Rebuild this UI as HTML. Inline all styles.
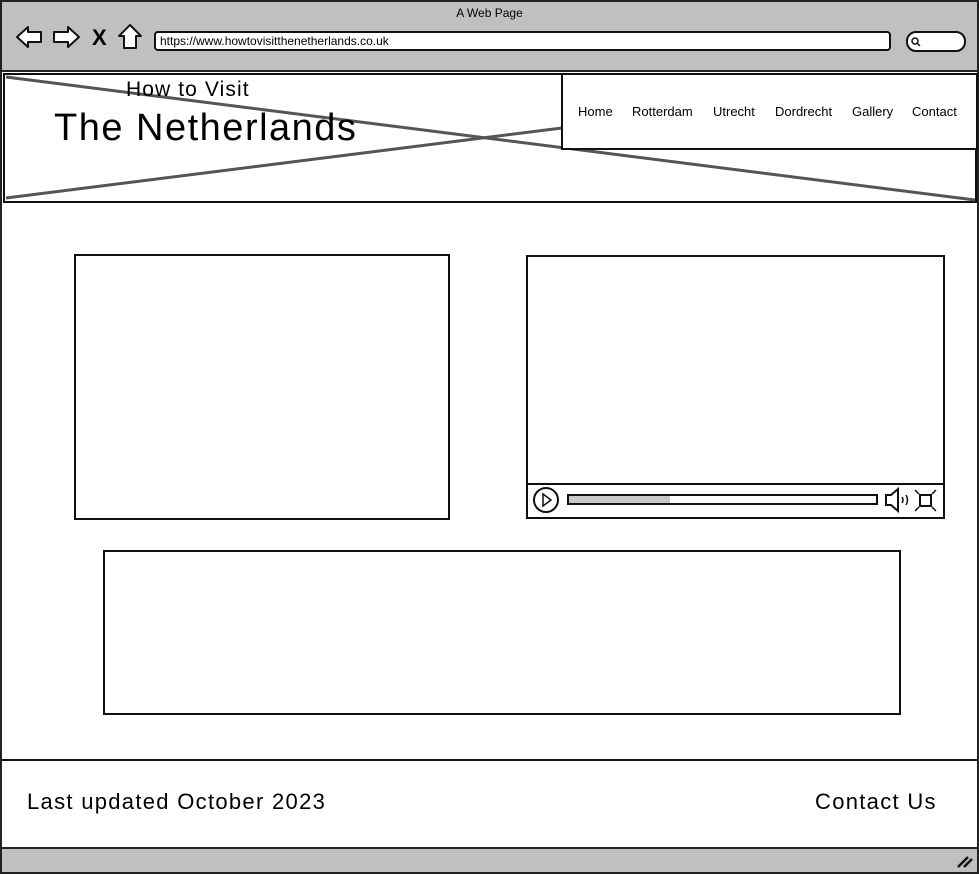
<!DOCTYPE html>
<html><head><meta charset="utf-8"><style>
body{margin:0;width:979px;height:874px;position:relative;background:#fff;font-family:"Liberation Sans",sans-serif;overflow:hidden}
.a{position:absolute;box-sizing:border-box}
.b{border:2px solid #111}
.t{position:absolute;white-space:nowrap;color:#000}
</style></head><body>
<div class="a" style="left:0;top:0;width:979px;height:874px;border:2px solid #222;background:#fff"></div>
<div class="a" style="left:2px;top:2px;width:975px;height:70px;background:#c0c0c0;border-bottom:2px solid #222"></div>
<div class="t" style="left:0;width:979px;text-align:center;top:6px;font-size:12px">A Web Page</div>
<svg class="a" style="left:0;top:0" width="979" height="874">
<g fill="#fff" stroke="#111" stroke-width="2" stroke-linejoin="round">
<path d="M17 37 L28 27 L28 32 L41 32 L41 42 L28 42 L28 47 Z"/>
<path d="M79 37 L68 27 L68 32 L54 32 L54 42 L68 42 L68 47 Z"/>
<path d="M130 25 L141 36 L136 36 L136 48 L124 48 L124 36 L119 36 Z"/>
</g>
<text x="92" y="45" font-size="22" font-weight="bold" font-family="Liberation Sans">X</text>
<rect x="155" y="32" width="735" height="18" rx="3" fill="#fff" stroke="#111" stroke-width="2"/>
<rect x="907" y="32" width="58" height="19" rx="9" fill="#fff" stroke="#111" stroke-width="2"/>
<circle cx="915" cy="41" r="3" fill="none" stroke="#111" stroke-width="1.5"/>
<line x1="917" y1="43" x2="920" y2="46" stroke="#111" stroke-width="1.5"/>
<rect x="4" y="74" width="972" height="128" fill="#fff" stroke="#111" stroke-width="2"/>
<line x1="6" y1="77" x2="975" y2="200" stroke="#555" stroke-width="3"/>
<line x1="6" y1="198" x2="975" y2="76" stroke="#555" stroke-width="3"/>
</svg>
<div class="t" style="left:126px;top:78px;font-size:21px;letter-spacing:1.1px">How to Visit</div>
<div class="t" style="left:160px;top:34px;font-size:12px">https://www.howtovisitthenetherlands.co.uk</div>
<div class="t" style="left:54px;top:107px;font-size:38px;letter-spacing:1.5px">The Netherlands</div>
<div class="a b" style="left:561px;top:73px;width:417px;height:77px;background:#fff"></div>
<div class="t" style="left:578px;top:104px;font-size:13px">Home</div>
<div class="t" style="left:632px;top:104px;font-size:13px">Rotterdam</div>
<div class="t" style="left:713px;top:104px;font-size:13px">Utrecht</div>
<div class="t" style="left:775px;top:104px;font-size:13px">Dordrecht</div>
<div class="t" style="left:852px;top:104px;font-size:13px">Gallery</div>
<div class="t" style="left:912px;top:104px;font-size:13px">Contact</div>
<div class="a b" style="left:74px;top:254px;width:376px;height:266px"></div>
<div class="a b" style="left:526px;top:255px;width:419px;height:264px"></div>
<div class="a" style="left:527px;top:483px;width:417px;height:2px;background:#111"></div>
<svg class="a" style="left:526px;top:484px" width="420" height="34">
<circle cx="20" cy="16" r="12" fill="none" stroke="#111" stroke-width="2"/>
<path d="M17 10 L25 16 L17 22 Z" fill="none" stroke="#111" stroke-width="1.5"/>
<rect x="42" y="11" width="309" height="9" fill="#fff" stroke="#111" stroke-width="2"/>
<rect x="43" y="12" width="101" height="7" fill="#c8c8c8"/>
<path d="M360 11 L365 11 L372 5 L372 27 L365 21 L360 21 Z" fill="#fff" stroke="#111" stroke-width="2"/>
<path d="M376 13 Q378 16 376 19 M380 11 Q383 16 380 21" fill="none" stroke="#111" stroke-width="1.5"/>
<rect x="394" y="11" width="11" height="11" fill="none" stroke="#111" stroke-width="2"/>
<path d="M389 6 L393 10 M410 6 L406 10 M389 27 L393 23 M410 27 L406 23" stroke="#111" stroke-width="1.5"/>
</svg>
<div class="a b" style="left:103px;top:550px;width:798px;height:165px"></div>
<div class="a" style="left:2px;top:759px;width:975px;height:2px;background:#111"></div>
<div class="t" style="left:27px;top:789px;font-size:22px;letter-spacing:1.3px">Last updated October 2023</div>
<div class="t" style="left:815px;top:789px;font-size:22px;letter-spacing:1.3px">Contact Us</div>
<div class="a" style="left:2px;top:847px;width:975px;height:25px;background:#c0c0c0;border-top:2px solid #222"></div>
<svg class="a" style="left:955px;top:852px" width="20" height="18"><path d="M3 15 L13 5 M9 15 L17 7" stroke="#111" stroke-width="2.5"/></svg>
</body></html>
